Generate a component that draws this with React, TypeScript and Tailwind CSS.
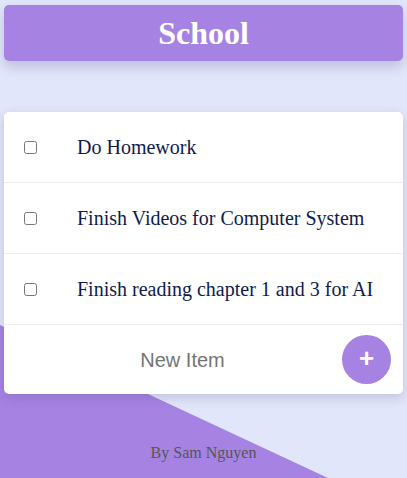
import React from "react";

const items = [
  "Do Homework",
  "Finish Videos for Computer System",
  "Finish reading chapter 1 and 3 for AI",
];

export default function App() {
  return (
    <div className="relative h-screen w-full overflow-hidden bg-[#e1e6fa]">
      <div className="absolute inset-0 bg-[#a683e2] [clip-path:polygon(0_325px,328px_100%,0_100%)]" />
      <div className="relative flex flex-col px-[4px] pt-[5px]">
        <div className="flex h-[56px] items-center justify-center rounded-[5px] bg-[#a683e2] shadow-[0_6px_12px_rgba(60,60,120,0.22)]">
          <h1 className="text-[32px] font-bold leading-none text-white [font-family:'Liberation_Serif',serif]">
            School
          </h1>
        </div>
        <div className="mt-[51px] overflow-hidden rounded-[5px] bg-white shadow-[0_4px_12px_rgba(60,60,120,0.2)]">
          {items.map((t) => (
            <div
              key={t}
              className="flex h-[71px] items-center border-b border-[#ececec]"
            >
              <input
                type="checkbox"
                className="ml-[20px] h-[13px] w-[13px] accent-[#a683e2]"
              />
              <span className="ml-[40px] text-[20px] text-[#0f1b4d] [font-family:'Liberation_Serif',serif]">
                {t}
              </span>
            </div>
          ))}
          <div className="flex h-[69px] items-center pl-[19px] pr-[12px]">
            <input
              type="text"
              placeholder="New Item"
              className="min-w-0 flex-1 bg-transparent text-center text-[20px] text-[#333] outline-none placeholder:text-[#757575] [font-family:'Liberation_Sans',sans-serif]"
            />
            <button className="flex h-[49px] w-[49px] items-center justify-center rounded-full bg-[#a683e2] pb-[3px] text-[26px] font-bold leading-none text-white [font-family:'Liberation_Sans',sans-serif]">
              +
            </button>
          </div>
        </div>
        <p className="mt-[51px] text-center text-[16px] leading-none text-[#555] [font-family:'Liberation_Serif',serif]">
          By Sam Nguyen
        </p>
      </div>
    </div>
  );
}
